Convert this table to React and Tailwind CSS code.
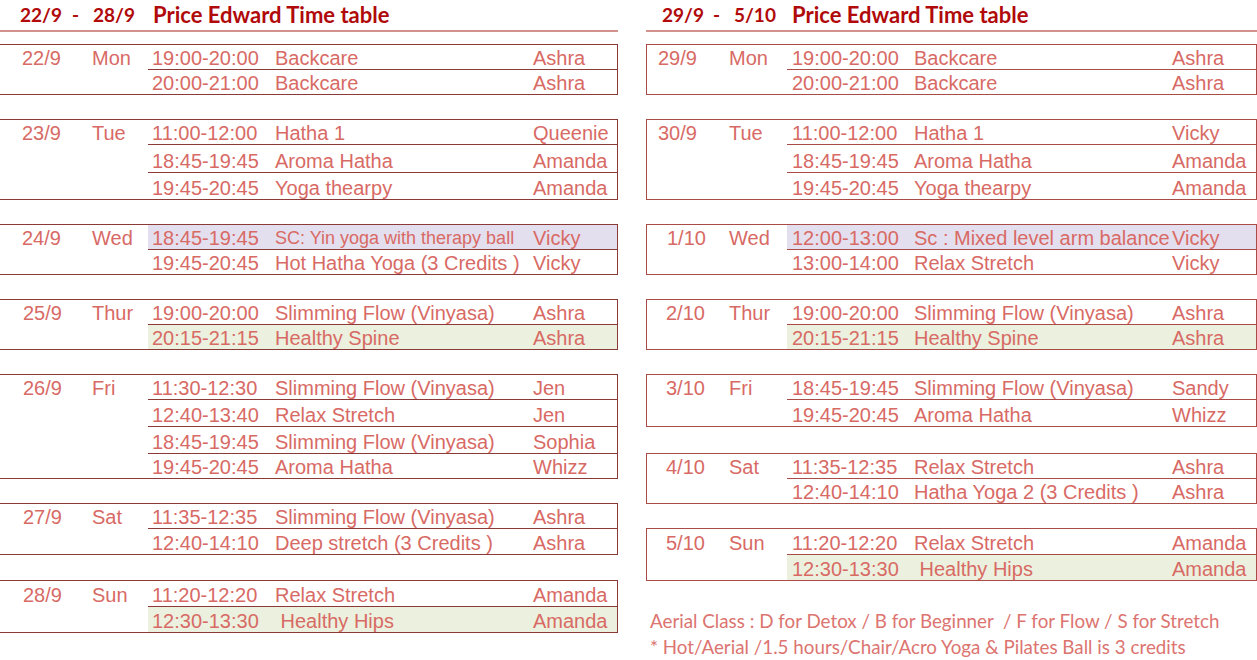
import React from 'react';

const LAV = 'bg-[#e4dfee]';
const GRN = 'bg-[#ebf1de]';

const leftBlocks = [
  { mt: 'mt-[12px]', date: '22/9', day: 'Mon', pl: 'pl-[22px]', rows: [
    { h: 'h-[24px]', t: '19:00-20:00', c: 'Backcare', p: 'Ashra' },
    { h: 'h-[25px]', t: '20:00-21:00', c: 'Backcare', p: 'Ashra' },
  ] },
  { mt: 'mt-[24px]', date: '23/9', day: 'Tue', pl: 'pl-[22px]', rows: [
    { h: 'h-[24px]', t: '11:00-12:00', c: 'Hatha 1', p: 'Queenie' },
    { h: 'h-[28px]', t: '18:45-19:45', c: 'Aroma Hatha', p: 'Amanda' },
    { h: 'h-[27px]', t: '19:45-20:45', c: 'Yoga thearpy', p: 'Amanda' },
  ] },
  { mt: 'mt-[24px]', date: '24/9', day: 'Wed', pl: 'pl-[22px]', rows: [
    { h: 'h-[24px]', t: '18:45-19:45', c: 'SC: Yin yoga with therapy ball', p: 'Vicky', bg: LAV, cs: 'text-[18px]' },
    { h: 'h-[25px]', t: '19:45-20:45', c: 'Hot Hatha Yoga (3 Credits )', p: 'Vicky' },
  ] },
  { mt: 'mt-[24px]', date: '25/9', day: 'Thur', pl: 'pl-[23px]', rows: [
    { h: 'h-[24px]', t: '19:00-20:00', c: 'Slimming Flow (Vinyasa)', p: 'Ashra' },
    { h: 'h-[25px]', t: '20:15-21:15', c: 'Healthy Spine', p: 'Ashra', bg: GRN },
  ] },
  { mt: 'mt-[24px]', date: '26/9', day: 'Fri', pl: 'pl-[23px]', rows: [
    { h: 'h-[24px]', t: '11:30-12:30', c: 'Slimming Flow (Vinyasa)', p: 'Jen' },
    { h: 'h-[27px]', t: '12:40-13:40', c: 'Relax Stretch', p: 'Jen' },
    { h: 'h-[27px]', t: '18:45-19:45', c: 'Slimming Flow (Vinyasa)', p: 'Sophia' },
    { h: 'h-[25px]', t: '19:45-20:45', c: 'Aroma Hatha', p: 'Whizz' },
  ] },
  { mt: 'mt-[24px]', date: '27/9', day: 'Sat', pl: 'pl-[23px]', rows: [
    { h: 'h-[24px]', t: '11:35-12:35', c: 'Slimming Flow (Vinyasa)', p: 'Ashra' },
    { h: 'h-[26px]', t: '12:40-14:10', c: 'Deep stretch (3 Credits )', p: 'Ashra' },
  ] },
  { mt: 'mt-[25px]', date: '28/9', day: 'Sun', pl: 'pl-[23px]', rows: [
    { h: 'h-[25px]', t: '11:20-12:20', c: 'Relax Stretch', p: 'Amanda' },
    { h: 'h-[26px]', t: '12:30-13:30', c: '\u00a0Healthy Hips', p: 'Amanda', bg: GRN },
  ] },
];

const rightBlocks = [
  { mt: 'mt-[12px]', date: '29/9', day: 'Mon', pl: 'pl-[11px]', rows: [
    { h: 'h-[24px]', t: '19:00-20:00', c: 'Backcare', p: 'Ashra' },
    { h: 'h-[25px]', t: '20:00-21:00', c: 'Backcare', p: 'Ashra' },
  ] },
  { mt: 'mt-[24px]', date: '30/9', day: 'Tue', pl: 'pl-[11px]', rows: [
    { h: 'h-[24px]', t: '11:00-12:00', c: 'Hatha 1', p: 'Vicky' },
    { h: 'h-[28px]', t: '18:45-19:45', c: 'Aroma Hatha', p: 'Amanda' },
    { h: 'h-[27px]', t: '19:45-20:45', c: 'Yoga thearpy', p: 'Amanda' },
  ] },
  { mt: 'mt-[24px]', date: '1/10', day: 'Wed', pl: 'pl-[20px]', rows: [
    { h: 'h-[24px]', t: '12:00-13:00', c: 'Sc : Mixed level arm balance', p: 'Vicky', bg: LAV },
    { h: 'h-[25px]', t: '13:00-14:00', c: 'Relax Stretch', p: 'Vicky' },
  ] },
  { mt: 'mt-[24px]', date: '2/10', day: 'Thur', pl: 'pl-[19px]', rows: [
    { h: 'h-[24px]', t: '19:00-20:00', c: 'Slimming Flow (Vinyasa)', p: 'Ashra' },
    { h: 'h-[25px]', t: '20:15-21:15', c: 'Healthy Spine', p: 'Ashra', bg: GRN },
  ] },
  { mt: 'mt-[24px]', date: '3/10', day: 'Fri', pl: 'pl-[19px]', rows: [
    { h: 'h-[24px]', t: '18:45-19:45', c: 'Slimming Flow (Vinyasa)', p: 'Sandy' },
    { h: 'h-[27px]', t: '19:45-20:45', c: 'Aroma Hatha', p: 'Whizz' },
  ] },
  { mt: 'mt-[26px]', date: '4/10', day: 'Sat', pl: 'pl-[19px]', rows: [
    { h: 'h-[24px]', t: '11:35-12:35', c: 'Relax Stretch', p: 'Ashra' },
    { h: 'h-[25px]', t: '12:40-14:10', c: 'Hatha Yoga 2 (3 Credits )', p: 'Ashra' },
  ] },
  { mt: 'mt-[24px]', date: '5/10', day: 'Sun', pl: 'pl-[19px]', rows: [
    { h: 'h-[25px]', t: '11:20-12:20', c: 'Relax Stretch', p: 'Amanda' },
    { h: 'h-[26px]', t: '12:30-13:30', c: '\u00a0Healthy Hips', p: 'Amanda', bg: GRN },
  ] },
];

function Block({ b, right }) {
  const border = right ? 'border-[#a94b47]' : 'border-[#8b3a37]';
  return (
    <div className={`${b.mt} flex flex-col border-y border-r ${right ? 'border-l' : ''} ${border}`}>
      {b.rows.map((r, i) => (
        <div key={i} className={`flex ${r.h}`}>
          <div className={`${right ? 'w-[82px]' : 'w-[92px]'} shrink-0 flex items-end pb-px ${b.pl}`}>
            {i === 0 ? b.date : ''}
          </div>
          <div className={`${right ? 'w-[58px]' : 'w-[56px]'} shrink-0 flex items-end pb-px`}>
            {i === 0 ? b.day : ''}
          </div>
          <div className={`flex flex-1 min-w-0 ${i > 0 ? 'border-t ' + border : ''} ${r.bg || ''}`}>
            <div className={`w-[123px] shrink-0 ${right ? 'pl-[5px]' : 'pl-[4px]'} flex items-end pb-px whitespace-nowrap`}>{r.t}</div>
            <div className={`w-[258px] shrink-0 pl-[4px] flex items-end pb-px whitespace-nowrap ${r.cs || ''}`}>{r.c}</div>
            <div className="flex-1 pl-[4px] flex items-end pb-px whitespace-nowrap">{r.p}</div>
          </div>
        </div>
      ))}
    </div>
  );
}

function Header({ a, b, right }) {
  return (
    <div className={`h-[32px] border-b-2 border-[#d4928e] flex items-end pb-[4px] font-['Lato',sans-serif] font-bold text-[#b00a0a] leading-[22px] ${right ? 'pl-[16px]' : 'pl-[20px]'}`}>
      <span className={`${right ? 'w-[51px]' : 'w-[52px]'} shrink-0 text-[19px]`}>{a}</span>
      <span className="w-[21px] shrink-0 text-[19px]">-</span>
      <span className={`${right ? 'w-[58px]' : 'w-[60px]'} shrink-0 text-[19px]`}>{b}</span>
      <span className="text-[22px] whitespace-nowrap">Price Edward Time table</span>
    </div>
  );
}

export default function App() {
  return (
    <div className="w-[1257px] h-[660px] bg-white flex overflow-hidden font-['Liberation_Sans',Arial,sans-serif] text-[20px] leading-[20px] text-[#d86a65]">
      <div className="w-[618px] shrink-0 flex flex-col">
        <Header a="22/9" b="28/9" />
        {leftBlocks.map((b) => (
          <Block key={b.date} b={b} />
        ))}
      </div>
      <div className="w-[28px] shrink-0" />
      <div className="w-[611px] shrink-0 flex flex-col">
        <Header a="29/9" b="5/10" right />
        {rightBlocks.map((b) => (
          <Block key={b.date} b={b} right />
        ))}
        <div className="mt-[27px] pl-[4px] font-['Lato',sans-serif] text-[18.8px] leading-[26px] text-[#dc7470] whitespace-pre">
          <div>Aerial Class : D for Detox / B for Beginner  / F for Flow / S for Stretch</div>
          <div>* Hot/Aerial /1.5 hours/Chair/Acro Yoga &amp; Pilates Ball is 3 credits</div>
        </div>
      </div>
    </div>
  );
}
